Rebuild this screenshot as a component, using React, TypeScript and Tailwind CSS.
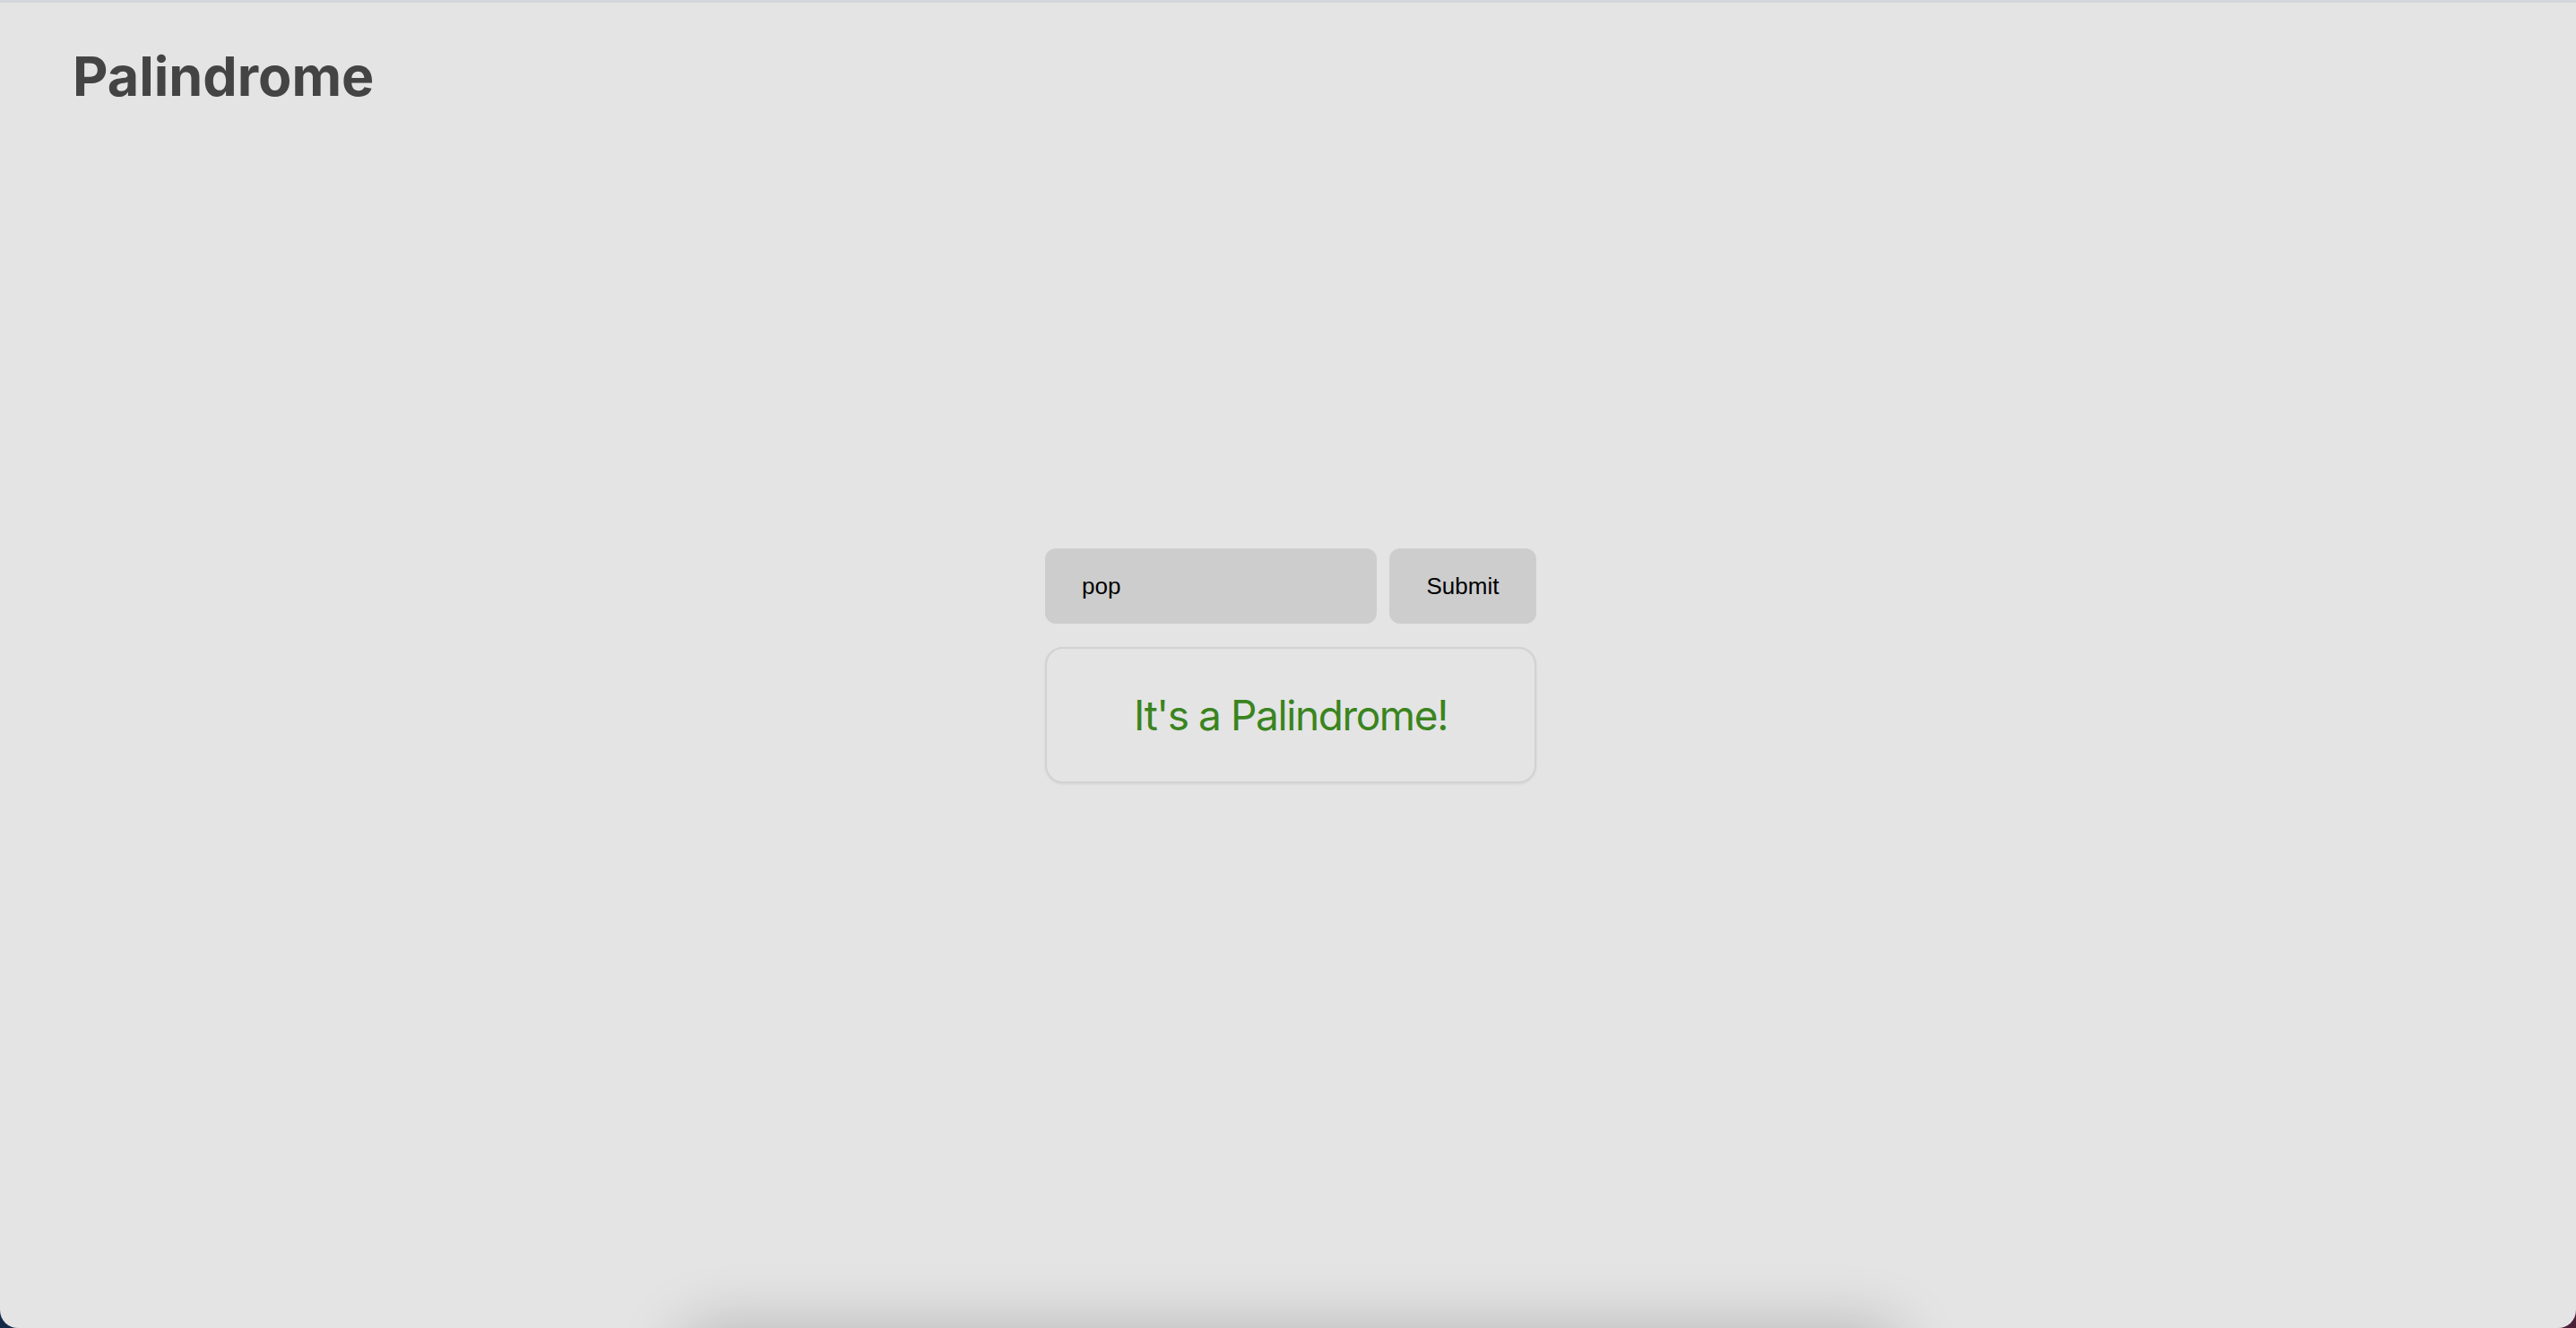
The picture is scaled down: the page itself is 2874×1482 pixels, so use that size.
export default function App() {
  return (
    <div className="relative h-screen w-full overflow-hidden bg-gradient-to-r from-[#14294a] via-[#2a2a4a] to-[#4a2038]">
      <div className="relative flex h-full w-full flex-col overflow-hidden rounded-b-[20px] border-t-[3px] border-[#d3d6da] bg-[#e4e4e4]">
        <div className="pl-[81px] pt-[52px]">
          <h1 className="text-[61px] font-bold leading-none text-[#444444]" style={{ fontFamily: "Inter, 'Noto Sans', sans-serif" }}>
            Palindrome
          </h1>
        </div>
        <div className="absolute inset-0 flex items-center justify-center pl-[6px]">
          <div className="flex w-[548px] flex-col gap-[26px] pt-[1px]">
            <div className="flex gap-[14px]">
              <input
                defaultValue="pop"
                className="h-[84px] w-[370px] rounded-[12px] bg-[#cdcdcd] pl-[41px] text-[26px] text-black outline-none"
                style={{ fontFamily: "'Liberation Sans', Arial, sans-serif" }}
              />
              <button
                className="h-[84px] flex-1 rounded-[12px] bg-[#cdcdcd] text-[26px] text-black"
                style={{ fontFamily: "'Liberation Sans', Arial, sans-serif" }}
              >
                Submit
              </button>
            </div>
            <div className="flex h-[152px] items-center justify-center rounded-[20px] border-2 border-[#d2d2d2] bg-[#e4e4e4] shadow-[0_1px_3px_rgba(0,0,0,0.08)]">
              <span className="text-[46px] leading-none tracking-[-1.4px] text-[#3a8420]" style={{ fontFamily: "Inter, 'Noto Sans', sans-serif" }}>
                It's a Palindrome!
              </span>
            </div>
          </div>
        </div>
        <div className="pointer-events-none absolute bottom-[-70px] left-[760px] h-[70px] w-[1360px] rounded-[30px] shadow-[0_0_70px_rgba(0,0,0,0.22)]" />
      </div>
    </div>
  );
}
